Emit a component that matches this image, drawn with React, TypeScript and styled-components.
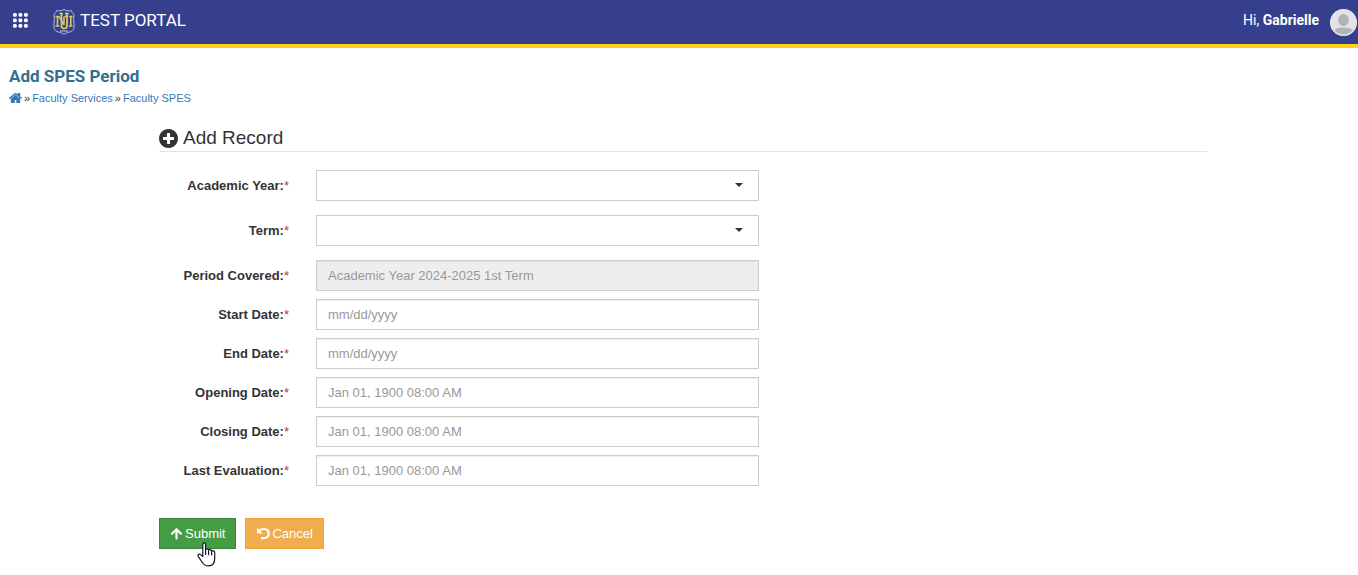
import React from "react";
import styled, { createGlobalStyle } from "styled-components";

const GlobalStyle = createGlobalStyle`
  *, *::before, *::after { box-sizing: border-box; }
  body {
    min-height: 100vh;
    margin: 0;
    background: #fff;
    color: #333;
    font-family: "Liberation Sans", Arial, sans-serif;
    font-size: 13px;
    line-height: 18px;
  }
`;

const displayFont = `Roboto, "Noto Sans", sans-serif`;

const TopBar = styled.header`
  display: flex;
  align-items: center;
  justify-content: space-between;
  height: 48px;
  padding: 0 1px 0 12px;
  background: #353f8e;
  border-bottom: 4px solid #ffd01a;
  color: #fff;
  font-family: ${displayFont};
`;

const BarGroup = styled.div`
  display: flex;
  align-items: center;
`;

const MenuButton = styled.button`
  display: flex;
  margin: 0 24px 4px 0;
  padding: 0;
  border: 0;
  background: none;
  color: inherit;
  cursor: pointer;
`;

const Brand = styled.a`
  display: flex;
  align-items: center;
  gap: 4px;
  color: inherit;
  font-size: 17px;
  line-height: 24px;
  text-decoration: none;
`;

const BrandName = styled.span`
  padding-bottom: 4px;
`;

const Greeting = styled.span`
  margin-right: 11px;
  padding-bottom: 4px;
  font-size: 14px;
`;

const PageHead = styled.div`
  padding: 17px 9px 0;
`;

const PageTitle = styled.h1`
  margin: 0;
  color: #31708f;
  font-family: ${displayFont};
  font-size: 17px;
  font-weight: 700;
  line-height: 22px;
`;

const Crumbs = styled.nav`
  display: flex;
  align-items: center;
  gap: 2px;
  margin-top: 4px;
  color: #333;
  font-size: 11px;
  line-height: 14px;

  a {
    display: flex;
    color: #337ab7;
    text-decoration: none;
  }
`;

const Content = styled.main`
  max-width: 1056px;
  margin: 0 auto;
  padding: 21px 0 26px 8px;
`;

const SectionTitle = styled.h2`
  display: flex;
  align-items: center;
  gap: 5px;
  margin: 0 0 18px;
  padding-bottom: 1px;
  border-bottom: 1px solid #e5e5e5;
  font-size: 19px;
  font-weight: 400;
  line-height: 24px;
`;

const FieldGroup = styled.div<{ $gap: number }>`
  display: flex;
  flex-direction: column;
  gap: ${(p) => p.$gap}px;
`;

const Row = styled.div`
  display: grid;
  grid-template-columns: 130px minmax(0, 443px);
  column-gap: 27px;
  align-items: center;
`;

const Label = styled.label`
  font-weight: 700;
  text-align: right;
`;

const Required = styled.span`
  color: #a94442;
  font-weight: 400;
`;

const Input = styled.input`
  width: 100%;
  height: 31px;
  padding: 0 11px 1px;
  border: 1px solid #ccc;
  border-radius: 0;
  background: #fff;
  box-shadow: inset 0 1px 1px rgba(0, 0, 0, 0.075);
  color: #555;
  font: inherit;

  &::placeholder {
    color: #999;
    opacity: 1;
  }

  &:disabled {
    background: #eee;
  }
`;

const SelectWrap = styled.div`
  position: relative;
`;

const Select = styled.select`
  display: block;
  width: 100%;
  height: 31px;
  padding: 0 30px 0 11px;
  appearance: none;
  border: 1px solid #ccc;
  border-radius: 0;
  background: #fff;
  color: #333;
  font: inherit;
`;

const Caret = styled.svg`
  position: absolute;
  top: 13px;
  right: 16px;
  pointer-events: none;
`;

const Actions = styled.div`
  display: flex;
  gap: 9px;
  margin-top: 32px;
`;

const Button = styled.button<{ $bg: string; $edge: string }>`
  position: relative;
  display: flex;
  align-items: center;
  gap: 2px;
  height: 31px;
  padding: 0 10px;
  border: 1px solid ${(p) => p.$edge};
  background: ${(p) => p.$bg};
  color: #fff;
  font: inherit;
  cursor: pointer;
`;

const Pointer = styled.svg`
  position: absolute;
  top: 23px;
  left: 37px;
  pointer-events: none;
`;

const GridIcon = () => (
  <svg width="16" height="16" viewBox="0 0 16 16" fill="currentColor" aria-hidden="true">
    {[1, 6.5, 12].map((y) =>
      [1, 6.5, 12].map((x) => <rect key={`${x}-${y}`} x={x} y={y} width="3.8" height="3.8" rx="1.4" />)
    )}
  </svg>
);

const Crest = () => (
  <svg width="24" height="28" viewBox="0 0 24 28" fill="none" aria-hidden="true">
    <path
      d="M12 1.5C10 2.8 7 3.3 4.4 2.6C4.2 4.2 3.2 5.5 1.9 6.4C3 10 2 14 1.8 17.500C1.7 22.5 5 24 8.500 24.6C10 25 11.200 25.500 12 26.400C12.800 25.500 14 25 15.500 24.600C19 24 22.300 22.500 22.200 17.500C22 14 21 10 22.100 6.400C20.800 5.500 19.800 4.200 19.600 2.600C17 3.300 14 2.800 12 1.500Z"
      stroke="#b8bddd"
      strokeWidth="1"
    />
    <path d="M3.500 8.500h3.500l5 8.500M5.500 8.500v9.500M3.500 18h4M12.500 8.500h3M12 17v-8.500M17 8.500h3.500M18.800 8.500v9.500M17 18h3.500" stroke="#d9c45e" strokeWidth="1.600" />
    <path d="M7.500 5.500h3.500M9.500 5.500v12.500q0 2.500 2.700 2.500t2.800-2.500v-12.500M13 5.500h3.500" stroke="#e1cd62" strokeWidth="1.700" />
    <path d="M8 23h8" stroke="#c5c9df" strokeWidth="1.400" strokeDasharray="1.400 .7" />
  </svg>
);

const Avatar = () => (
  <svg width="27" height="27" viewBox="0 0 27 27" role="img" aria-label="Profile">
    <defs>
      <clipPath id="avatar-clip">
        <circle cx="13.5" cy="13.5" r="13.5" />
      </clipPath>
    </defs>
    <g clipPath="url(#avatar-clip)">
      <rect width="27" height="27" fill="#e1e3e4" />
      <ellipse cx="13.500" cy="11" rx="5.400" ry="6" fill="#aeb4b7" />
      <path d="M4 24c0-5 4-5.500 9.500-5.500s9.500 .5 9.500 5.500v3H4z" fill="#aeb4b7" />
      <circle cx="13.5" cy="13.5" r="12.700" fill="none" stroke="#e1e3e4" strokeWidth="1.600" />
    </g>
  </svg>
);

const HomeIcon = () => (
  <svg width="13" height="10" viewBox="89 253 1614 1283" fill="currentColor" role="img" aria-label="Home">
    <path d="M1472 992v480q0 26-19 45t-45 19h-384v-384h-256v384h-384q-26 0-45-19t-19-45v-480q0-1 .5-3t.5-3l575-474 575 474q1 2 1 6zm223-69l-62 74q-8 9-21 11h-3q-13 0-21-7l-692-577-692 577q-12 8-24 7-13-2-21-11l-62-74q-8-10-7-23.500t11-21.500l719-599q32-26 76-26t76 26l244 204v-195q0-14 9-23t23-9h192q14 0 23 9t9 23v408l219 182q10 8 11 21.500t-7 23.500z" stroke="currentColor" strokeWidth="50" />
  </svg>
);

const PlusIcon = () => (
  <svg width="19" height="19" viewBox="128 128 1536 1536" fill="currentColor" aria-hidden="true">
    <path d="M1344 960v-128q0-26-19-45t-45-19h-256v-256q0-26-19-45t-45-19h-128q-26 0-45 19t-19 45v256h-256q-26 0-45 19t-19 45v128q0 26 19 45t45 19h256v256q0 26 19 45t45 19h128q26 0 45-19t19-45v-256h256q26 0 45-19t19-45zm320-64q0 209-103 385.500t-279.500 279.500-385.500 103-385.500-103-279.500-279.500-103-385.500 103-385.500 279.500-279.500 385.500-103 385.500 103 279.500 279.500 103 385.500z" />
  </svg>
);

const ArrowUpIcon = () => (
  <svg width="13" height="13" viewBox="0 0 13 13" fill="none" aria-hidden="true">
    <path d="M6.500 11.500V2.500M2 6.700L6.500 2.200L11 6.700" stroke="currentColor" strokeWidth="2.200" strokeLinecap="round" strokeLinejoin="round" />
  </svg>
);

const UndoIcon = () => (
  <svg width="14" height="13" viewBox="0 0 14 13" fill="none" aria-hidden="true">
    <path d="M1 .8V6.500H6.700Z" fill="currentColor" />
    <path d="M3.200 3.800C5 2 7 2 8.300 2C11 2 12.700 4 12.700 6.500C12.700 9 11 11.200 8.200 11.200H5" stroke="currentColor" strokeWidth="2.200" />
  </svg>
);

const HandPointer = () => (
  <Pointer width="19" height="25" viewBox="0 0 19 25" aria-hidden="true">
    <path
      d="M5.800 14.500V2.600C5.800 .4 8.600 .4 8.600 2.600V8C8.800 6.400 11.600 6.400 11.600 8.400C12 7 14.600 7.200 14.600 9.300C15.200 8.300 17.700 8.600 17.700 10.600V16.500C17.700 21 15.500 23.900 11.400 23.900C7.300 23.900 6.200 22 4.600 19.500L1.200 14.300C.2 12.500 2.400 11.500 3.600 12.600Z"
      fill="#fff"
      stroke="#15152b"
      strokeWidth="1.200"
      strokeLinejoin="round"
    />
    <path d="M8.600 7.500v5M11.600 8.400v4.300M14.600 9.300v3.700" stroke="#15152b" strokeWidth="1.200" strokeLinecap="round" />
  </Pointer>
);

const selects = [
  { id: "academic-year", label: "Academic Year:" },
  { id: "term", label: "Term:" },
];

const inputs = [
  { id: "period", label: "Period Covered:", hint: "Academic Year 2024-2025 1st Term", disabled: true },
  { id: "start", label: "Start Date:", hint: "mm/dd/yyyy" },
  { id: "end", label: "End Date:", hint: "mm/dd/yyyy" },
  { id: "opening", label: "Opening Date:", hint: "Jan 01, 1900 08:00 AM" },
  { id: "closing", label: "Closing Date:", hint: "Jan 01, 1900 08:00 AM" },
  { id: "last", label: "Last Evaluation:", hint: "Jan 01, 1900 08:00 AM" },
];

const FieldLabel = ({ id, text }: { id: string; text: string }) => (
  <Label htmlFor={id}>
    {text}
    <Required>*</Required>
  </Label>
);

export default function App() {
  return (
    <>
      <GlobalStyle />
      <TopBar>
        <BarGroup>
          <MenuButton type="button" aria-label="Menu">
            <GridIcon />
          </MenuButton>
          <Brand href="#">
            <Crest />
            <BrandName>TEST PORTAL</BrandName>
          </Brand>
        </BarGroup>
        <BarGroup>
          <Greeting>
            Hi, <b>Gabrielle</b>
          </Greeting>
          <Avatar />
        </BarGroup>
      </TopBar>
      <PageHead>
        <PageTitle>Add SPES Period</PageTitle>
        <Crumbs aria-label="Breadcrumb">
          <a href="#">
            <HomeIcon />
          </a>
          <span>»</span>
          <a href="#">Faculty Services</a>
          <span>»</span>
          <a href="#">Faculty SPES</a>
        </Crumbs>
      </PageHead>
      <Content>
        <SectionTitle>
          <PlusIcon />
          Add Record
        </SectionTitle>
        <form onSubmit={(e) => e.preventDefault()}>
          <FieldGroup $gap={14}>
            {selects.map((f) => (
              <Row key={f.id}>
                <FieldLabel id={f.id} text={f.label} />
                <SelectWrap>
                  <Select id={f.id} defaultValue="">
                    <option value="" />
                  </Select>
                  <Caret width="8" height="4" viewBox="0 0 8 4" aria-hidden="true">
                    <path d="M0 0h8L4 4z" fill="#333" />
                  </Caret>
                </SelectWrap>
              </Row>
            ))}
            <FieldGroup $gap={8}>
              {inputs.map((f) => (
                <Row key={f.id}>
                  <FieldLabel id={f.id} text={f.label} />
                  <Input id={f.id} placeholder={f.hint} disabled={f.disabled} />
                </Row>
              ))}
            </FieldGroup>
          </FieldGroup>
          <Actions>
            <Button type="submit" $bg="#449d44" $edge="#398439">
              <ArrowUpIcon />
              Submit
              <HandPointer />
            </Button>
            <Button type="button" $bg="#f0ad4e" $edge="#eea236">
              <UndoIcon />
              Cancel
            </Button>
          </Actions>
        </form>
      </Content>
    </>
  );
}
